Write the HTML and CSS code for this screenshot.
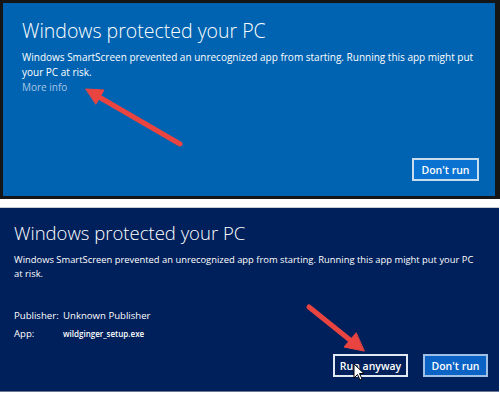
FILE: index.html
```html
<!DOCTYPE html>
<html lang="en">
<head>
  <meta charset="UTF-8" />
  <title>Windows protected your PC</title>
  <link rel="stylesheet" href="styles.css">
</head>
<body>
  <div class="page">
    <div class="panel win10">
      <h1>Windows protected your PC</h1>
      <p class="msg">Windows SmartScreen prevented an unrecognized app from starting. Running this app might put<br>your PC at risk.</p>
      <a class="more">More info</a>
      <div class="actions">
        <button class="btn primary">Don't run</button>
      </div>
    </div>

    <div class="panel win8">
      <h1>Windows protected your PC</h1>
      <p class="msg">Windows SmartScreen prevented an unrecognized app from starting. Running this app might put your PC<br>at risk.</p>
      <div class="details">
        <span>Publisher:</span><span>Unknown Publisher</span>
        <span>App:</span><span class="file">wildginger_setup.exe</span>
      </div>
      <div class="actions">
        <button class="btn outline">Run anyway</button>
        <button class="btn primary">Don't run</button>
      </div>
    </div>

    <!-- annotation arrows + cursor drawn over the screenshots -->
    <svg class="overlay" width="500" height="400" viewBox="0 0 500 400">
      <g stroke="#ea4440" stroke-width="5" stroke-linecap="round" fill="#ea4440">
        <line x1="180" y1="144" x2="99" y2="97" />
        <polygon points="86,89 104,90 96,104" stroke-width="1" stroke-linejoin="round" />
        <line x1="309" y1="307" x2="350" y2="340" />
        <polygon points="364,351 344,347 356,333" stroke-width="1" stroke-linejoin="round" />
      </g>
      <path d="M354 364 L354 378 L357.5 374.5 L360 380 L362 379 L359.5 373.5 L364 373.5 Z" fill="#fff" stroke="#000" stroke-width="1" />
    </svg>
  </div>
</body>
</html>
```

FILE: styles.css
```css
body {
  margin: 0;
  background: #fff;
  font-family: "Open Sans", "Noto Sans", sans-serif;
}

.page {
  position: relative;
  width: 500px;
  height: 400px;
}

.panel {
  box-sizing: border-box;
  display: flex;
  flex-direction: column;
  color: #fff;
}

.panel h1 {
  margin: 0;
  font-weight: 300;
  font-size: 19.5px;
  line-height: 24px;
  white-space: nowrap;
}

.msg {
  margin: 0;
  font-size: 10px;
  line-height: 15px;
  white-space: nowrap;
}

.win10 {
  height: 199px;
  background: #0063b1;
  border: 3px solid #151515;
  border-right-width: 5px;
  padding: 16px 16px 15px 19px;
}

.win10 .msg {
  margin-top: 7px;
}

.more {
  font-size: 10px;
  line-height: 15px;
  color: #a8c6e6;
}

.win8 {
  height: 185px;
  margin-top: 8px;
  width: 499px;
  background: #00205b;
  border-top: 1px solid #c9ced8;
  border-bottom: 1px solid #6a7690;
  padding: 13px 11px 14px 14px;
}

.win8 h1 {
  font-size: 18.5px;
}

.win8 .msg {
  margin-top: 8px;
  font-size: 9.4px;
  line-height: 14px;
}

.details {
  display: grid;
  grid-template-columns: 49px auto;
  row-gap: 4px;
  margin-top: 28px;
  font-size: 9.6px;
  line-height: 14px;
}

.details .file {
  font-size: 8px;
  font-weight: 600;
}

.actions {
  margin-top: auto;
  display: flex;
  justify-content: flex-end;
  gap: 15px;
}

.btn {
  font-family: inherit;
  font-size: 10.5px;
  font-weight: 600;
  color: #fff;
  height: 23px;
  padding: 0;
  border: 2px solid #dfe8f3;
  border-radius: 0;
  white-space: nowrap;
}

.win10 .btn {
  width: 67px;
  background: #0a72d1;
  border-color: #c8dcf0;
}

.win8 .btn.outline {
  width: 75px;
  background: #00205b;
}

.win8 .btn.primary {
  width: 65px;
  background: #0b63c6;
  border-color: #9fbfe6;
}

.overlay {
  position: absolute;
  left: 0;
  top: 0;
  pointer-events: none;
}
```
